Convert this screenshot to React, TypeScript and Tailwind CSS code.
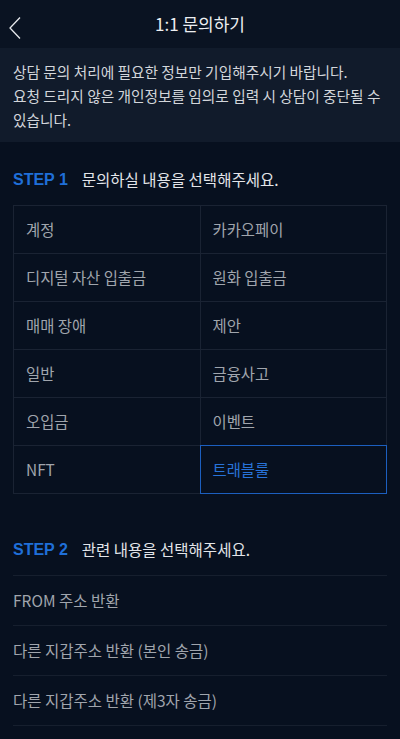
import { useState } from "react";

const categories = [
  "계정",
  "카카오페이",
  "디지털 자산 입출금",
  "원화 입출금",
  "매매 장애",
  "제안",
  "일반",
  "금융사고",
  "오입금",
  "이벤트",
  "NFT",
  "트래블룰",
];

const details = [
  "FROM 주소 반환",
  "다른 지갑주소 반환 (본인 송금)",
  "다른 지갑주소 반환 (제3자 송금)",
];

export default function App() {
  const [selected, setSelected] = useState("트래블룰");

  return (
    <div
      className="min-h-[739px] w-[400px] bg-[#07101f] text-[#d5d8dd]"
      style={{ fontFamily: '"Noto Sans CJK KR", "Noto Sans", sans-serif' }}
    >
      {/* header */}
      <header className="relative flex h-12 items-center justify-center bg-[#0a1322]">
        <button className="absolute left-[4px] top-[12px] p-1 text-[#e6e8ec]">
          <svg width="14" height="24" viewBox="0 0 14 24" fill="none">
            <path d="M12 1.5 2 12l10 10.5" stroke="currentColor" strokeWidth="1.3" />
          </svg>
        </button>
        <h1 className="text-[17px] text-[#eceef1]">1:1 문의하기</h1>
      </header>

      {/* notice */}
      <div className="bg-[#111b2b] px-[13px] pb-[10px] pt-[12px] text-[14.7px] leading-6 text-[#d3d6db]">
        상담 문의 처리에 필요한 정보만 기입해주시기 바랍니다.
        <br />
        요청 드리지 않은 개인정보를 임의로 입력 시 상담이 중단될 수 있습니다.
      </div>

      {/* step 1 */}
      <section className="px-[13px] pt-[26px]">
        <div className="flex items-center gap-[14px]">
          <span
            className="text-[16px] font-bold text-[#1f6fd8]"
            style={{ fontFamily: '"Liberation Sans", Arial, sans-serif' }}
          >
            STEP 1
          </span>
          <span className="text-[15.5px] text-[#e3e5e9]">문의하실 내용을 선택해주세요.</span>
        </div>

        <div className="mt-[13px] grid grid-cols-2 border-l border-t border-[#1a2333]">
          {categories.map((c) => {
            const active = c === selected;
            return (
              <button
                key={c}
                onClick={() => setSelected(c)}
                className={`flex h-[48px] items-center border-b border-r px-[12px] text-left text-[15.4px] ${
                  active
                    ? "-ml-px -mt-px h-[49px] border border-[#1c5fbf] text-[#2873d9]"
                    : "border-[#1a2333] text-[#a0a5ad]"
                }`}
              >
                {c}
              </button>
            );
          })}
        </div>
      </section>

      {/* step 2 */}
      <section className="px-[13px] pt-[44px]">
        <div className="flex items-center gap-[14px]">
          <span
            className="text-[16px] font-bold text-[#1f6fd8]"
            style={{ fontFamily: '"Liberation Sans", Arial, sans-serif' }}
          >
            STEP 2
          </span>
          <span className="text-[15.5px] text-[#e3e5e9]">관련 내용을 선택해주세요.</span>
        </div>

        <ul className="mt-[13px] border-t border-[#161f2e]">
          {details.map((d) => (
            <li
              key={d}
              className="flex h-[50px] items-center border-b border-[#161f2e] text-[15.5px] text-[#a0a5ad]"
            >
              {d}
            </li>
          ))}
        </ul>
      </section>
    </div>
  );
}
